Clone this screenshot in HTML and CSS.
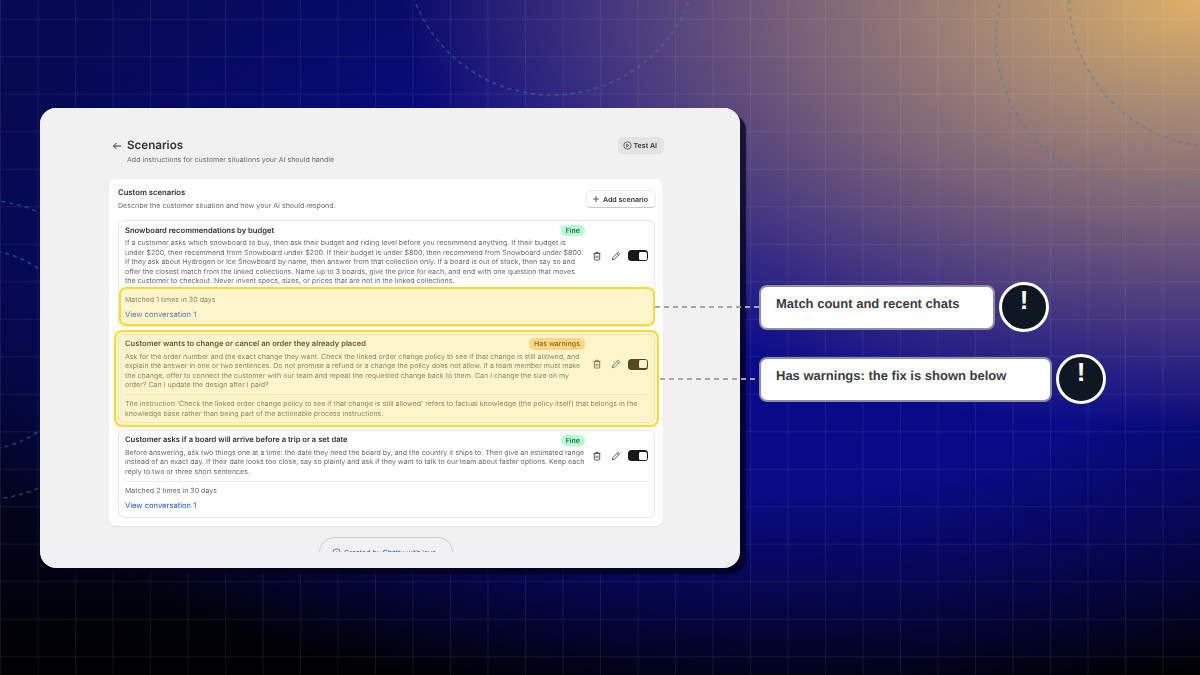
FILE: index.html
```html
<!DOCTYPE html>
<html lang="en">
<head>
	<meta charset="utf-8">
	<title>Scenarios</title>
	<link rel="stylesheet" href="styles.css">
</head>
<body>
<div class="stage">
	<svg class="rings" width="1200" height="675" viewBox="0 0 1200 675" fill="none">
		<circle cx="552" cy="-52" r="147"/>
		<circle cx="1147" cy="38" r="151"/>
		<circle cx="1219" cy="-3" r="150"/>
		<circle cx="-20" cy="350" r="150"/>
		<circle cx="-20" cy="350" r="100"/>
	</svg>

	<div class="window">
		<div class="page">
			<div class="top">
				<svg class="back" width="10" height="10" viewBox="0 0 10 10" fill="none"><path d="M9 5H1.500M4.500 2 1.500 5l3 3"/></svg>
				<div class="top-text">
					<h1>Scenarios</h1>
					<p>Add instructions for customer situations your AI should handle</p>
				</div>
				<button class="btn-test">
					<svg width="9" height="9" viewBox="0 0 9 9" fill="none"><circle cx="4.500" cy="4.500" r="3.700"/><path d="M3.600 3v3l2.300-1.500z"/></svg>
					Test AI
				</button>
			</div>

			<div class="panel">
				<div class="panel-head">
					<div>
						<h2>Custom scenarios</h2>
						<p>Describe the customer situation and how your AI should respond.</p>
					</div>
					<button class="btn-add">
						<svg width="8" height="8" viewBox="0 0 8 8" fill="none"><path d="M4 1v6M1 4h6"/></svg>
						Add scenario
					</button>
				</div>

				<div class="scenario">
					<div class="sc-row">
						<div class="sc-main">
							<div class="sc-head">
								<h3>Snowboard recommendations by budget</h3>
								<span class="tag tag-fine">Fine</span>
							</div>
							<p>If a customer asks which snowboard to buy, then ask their budget and riding level before you recommend anything. If their budget is under $200, then recommend from Snowboard under $200. If their budget is under $800, then recommend from Snowboard under $800. If they ask about Hydrogen or Ice Snowboard by name, then answer from that collection only. If a board is out of stock, then say so and offer the closest match from the linked collections. Name up to 3 boards, give the price for each, and end with one question that moves the customer to checkout. Never invent specs, sizes, or prices that are not in the linked collections.</p>
						</div>
						<div class="sc-actions">
							<svg class="ico" width="10" height="10" viewBox="0 0 10 10" fill="none"><path d="M1.500 2.500h7M3.700 2.500V1.300h2.600v1.200M2.300 2.500v5.700q0 .8.8.8h3.800q.8 0 .8-.8V2.500M4.100 4.600v2.600M5.900 4.600v2.600"/></svg>
							<svg class="ico ico-edit" width="10" height="10" viewBox="0 0 10 10" fill="none"><path d="M1.300 8.700l.6-2.300 4.700-4.700q.6-.6 1.200 0l.5.5q.6.6 0 1.200L3.600 8.100zM5.800 2.500l1.700 1.700"/></svg>
							<span class="toggle"><i></i></span>
						</div>
					</div>
					<div class="sc-meta sc-meta-open">
						<span>Matched 1 times in 30 days</span>
						<a href="#">View conversation 1</a>
					</div>
					<div class="mark mark-meta"></div>
				</div>

				<div class="scenario">
					<div class="sc-row">
						<div class="sc-main">
							<div class="sc-head">
								<h3>Customer wants to change or cancel an order they already placed</h3>
								<span class="tag tag-warn">Has warnings</span>
							</div>
							<p>Ask for the order number and the exact change they want. Check the linked order change policy to see if that change is still allowed, and explain the answer in one or two sentences. Do not promise a refund or a change the policy does not allow. If a team member must make the change, offer to connect the customer with our team and repeat the requested change back to them. Can I change the size on my order? Can I update the design after I paid?</p>
						</div>
						<div class="sc-actions">
							<svg class="ico" width="10" height="10" viewBox="0 0 10 10" fill="none"><path d="M1.500 2.500h7M3.700 2.500V1.300h2.600v1.200M2.300 2.500v5.700q0 .8.8.8h3.800q.8 0 .8-.8V2.500M4.100 4.600v2.600M5.900 4.600v2.600"/></svg>
							<svg class="ico ico-edit" width="10" height="10" viewBox="0 0 10 10" fill="none"><path d="M1.300 8.700l.6-2.300 4.700-4.700q.6-.6 1.200 0l.5.5q.6.6 0 1.200L3.600 8.100zM5.800 2.500l1.700 1.700"/></svg>
							<span class="toggle"><i></i></span>
						</div>
					</div>
					<div class="sc-rule"></div>
					<p class="sc-warning">The instruction 'Check the linked order change policy to see if that change is still allowed' refers to factual knowledge (the policy itself) that belongs in the knowledge base rather than being part of the actionable process instructions.</p>
					<div class="mark mark-card"></div>
				</div>

				<div class="scenario">
					<div class="sc-row">
						<div class="sc-main">
							<div class="sc-head">
								<h3>Customer asks if a board will arrive before a trip or a set date</h3>
								<span class="tag tag-fine">Fine</span>
							</div>
							<p>Before answering, ask two things one at a time: the date they need the board by, and the country it ships to. Then give an estimated range instead of an exact day. If their date looks too close, say so plainly and ask if they want to talk to our team about faster options. Keep each reply to two or three short sentences.</p>
						</div>
						<div class="sc-actions">
							<svg class="ico" width="10" height="10" viewBox="0 0 10 10" fill="none"><path d="M1.500 2.500h7M3.700 2.500V1.300h2.600v1.200M2.300 2.500v5.700q0 .8.8.8h3.800q.8 0 .8-.8V2.500M4.100 4.600v2.600M5.900 4.600v2.600"/></svg>
							<svg class="ico ico-edit" width="10" height="10" viewBox="0 0 10 10" fill="none"><path d="M1.300 8.700l.6-2.300 4.700-4.700q.6-.6 1.200 0l.5.5q.6.6 0 1.200L3.600 8.100zM5.800 2.500l1.700 1.700"/></svg>
							<span class="toggle"><i></i></span>
						</div>
					</div>
					<div class="sc-rule"></div>
					<div class="sc-meta">
						<span>Matched 2 times in 30 days</span>
						<a href="#">View conversation 1</a>
					</div>
				</div>
			</div>

			<div class="footer-wrap">
				<div class="footer-pill">
					<svg width="9" height="9" viewBox="0 0 9 9" fill="none"><circle cx="4.500" cy="4.500" r="3.700"/><path d="M4.500 7V3.500M3 4.500l1.500 1 1.500-1.500"/></svg>
					<span>Created by <a href="#">Chatty</a> with love</span>
				</div>
			</div>
		</div>
	</div>

	<div class="callout callout-one">
		<div class="lead lead-one"></div>
		<div class="note note-one">Match count and recent chats</div>
		<div class="alert">!</div>
	</div>
	<div class="callout callout-two">
		<div class="lead lead-two"></div>
		<div class="note note-two">Has warnings: the fix is shown below</div>
		<div class="alert">!</div>
	</div>
</div>
</body>
</html>
```

FILE: styles.css
```css
* {
	box-sizing: border-box;
}
html, body {
	margin: 0;
	padding: 0;
}
body {
	font-family: Inter, "Liberation Sans", sans-serif;
	text-rendering: geometricPrecision;
}
h1, h2, h3, p {
	margin: 0;
}
a {
	text-decoration: none;
}
button {
	font-family: inherit;
	text-rendering: inherit;
}

/* backdrop */
.stage {
	position: relative;
	width: 1200px;
	height: 675px;
	overflow: hidden;
	padding: 108px 0 0 40px;
	background-color: #05062e;
	background-image:
		linear-gradient(to right, rgba(255,255,255,.07) 1px, transparent 1px),
		linear-gradient(to bottom, rgba(255,255,255,.07) 1px, transparent 1px),
		radial-gradient(ellipse 800px 430px at 100% 0, #dfb067 0, #a98b74 25%, #7a6278 50%, #4a3a7f 72%, rgba(20,15,130,0) 100%),
		radial-gradient(ellipse 880px 430px at 780px 290px, #0a0a8c 0, #0a0a88 45%, rgba(10,10,110,0) 100%),
		linear-gradient(to bottom, #060a55 0, #040840 45%, #000 100%);
	background-size: 37.5px 37.5px, 37.5px 37.5px, auto, auto, auto;
	background-position: 0 0, 0 18.75px, 0 0, 0 0, 0 0;
}
.rings {
	position: absolute;
	left: 0;
	top: 0;
}
.rings circle {
	stroke: rgba(60,130,170,.5);
	stroke-width: 1.5;
	stroke-dasharray: 4 4;
}

/* app window */
.window {
	position: relative;
	width: 700px;
	height: 460px;
	background: #f1f1f5;
	border-radius: 16px;
	box-shadow: 6px 6px 1px rgba(3,3,25,.75);
	overflow: hidden;
}
.page {
	height: 444px;
	overflow: hidden;
	padding: 29px 77px 0 69px;
	background: #f1f1f2;
	filter: blur(.3px);
}

.top {
	display: flex;
	align-items: flex-start;
	margin: 0 -1px 0 3px;
}
.back {
	margin: 3.500px 5px 0 0;
	flex: none;
}
.back path {
	stroke: #303030;
	stroke-width: 1;
}
.top-text {
	flex: 1;
}
.top-text h1 {
	font-size: 11.600px;
	line-height: 17px;
	font-weight: 600;
	color: #303030;
}
.top-text p {
	font-size: 7.050px;
	line-height: 9.600px;
	margin-top: 1px;
	color: #6b6b6b;
}
.btn-test {
	display: flex;
	align-items: center;
	gap: 2px;
	height: 17px;
	padding: 0 7px 0 5px;
	border: 0;
	border-radius: 5px;
	background: #e3e3e3;
	color: #303030;
	font-size: 7.050px;
	font-weight: 600;
}
.btn-test svg {
	stroke: #4a4a4a;
	stroke-width: .8;
}

/* panel */
.panel {
	margin-top: 14.500px;
	padding: 8.700px 8px 8px 9px;
	background: #fff;
	border-radius: 7px;
	box-shadow: 0 1px 1px rgba(0,0,0,.08);
}
.panel-head {
	display: flex;
	align-items: center;
	justify-content: space-between;
	margin-bottom: 9.600px;
}
.panel-head h2 {
	font-size: 7.700px;
	line-height: 9.600px;
	font-weight: 600;
	color: #303030;
}
.panel-head p {
	font-size: 7.050px;
	line-height: 9.600px;
	margin-top: 3.400px;
	color: #6b6b6b;
}
.btn-add {
	display: flex;
	align-items: center;
	gap: 3px;
	height: 16px;
	padding: 0 7px 0 5px;
	border: 0;
	border-radius: 4px;
	background: #fff;
	box-shadow: 0 0 0 .5px #d8d8d8, 0 1px 0 #bbb;
	color: #303030;
	font-size: 7.050px;
	font-weight: 600;
}
.btn-add svg {
	stroke: #4a4a4a;
	stroke-width: .9;
}

/* scenario cards */
.scenario {
	position: relative;
	margin-bottom: 7px;
	padding: 4.700px 6px 6px;
	border: 1px solid #e8e8e8;
	border-radius: 6px;
	background: #fff;
}
.scenario:last-child {
	margin-bottom: 0;
}
.sc-row {
	display: flex;
	align-items: center;
}
.sc-main {
	width: 460px;
	flex: none;
}
.sc-head {
	display: flex;
	align-items: center;
	justify-content: space-between;
	height: 9.600px;
	margin-bottom: 2.800px;
}
.sc-head h3 {
	font-size: 7.600px;
	line-height: 9.600px;
	font-weight: 600;
	color: #303030;
}
.sc-main p,
.sc-warning {
	font-size: 7.050px;
	line-height: 9.500px;
	color: #6b6b6b;
}
.tag {
	padding: 0 5px;
	height: 11.500px;
	line-height: 11.500px;
	border-radius: 5px;
	font-size: 7.050px;
	font-weight: 500;
}
.tag-fine {
	background: #b4fed2;
	color: #0c5132;
}
.tag-warn {
	background: #ffd6a4;
	color: #5e4200;
}
.sc-actions {
	display: flex;
	align-items: center;
	margin-left: auto;
}
.ico {
	stroke: #4a4a4a;
	stroke-width: .9;
	margin-right: 9px;
}
.ico-edit {
	margin-right: 7px;
}
.toggle {
	display: block;
	width: 20px;
	height: 11px;
	padding: 1.500px;
	border-radius: 3.500px;
	background: #1a1a1a;
}
.toggle i {
	display: block;
	width: 8px;
	height: 8px;
	margin-left: auto;
	border-radius: 1.500px;
	background: #fff;
}
.sc-rule {
	height: 1px;
	margin-top: 4.700px;
	background: #ebebeb;
}
.sc-warning {
	margin-top: 4px;
	margin-bottom: -2.500px;
}
.sc-meta {
	margin-top: 4px;
	font-size: 7.050px;
	line-height: 9.500px;
	color: #6b6b6b;
}
.sc-meta-open {
	margin-top: 9.500px;
}
.sc-meta span,
.sc-meta a {
	display: block;
}
.sc-meta a {
	margin-top: 5.500px;
	font-size: 7.600px;
	color: #1f5bc8;
}

/* yellow highlight over a card */
.mark {
	position: absolute;
	border: 2.500px solid #ffd92e;
	background: rgba(255,214,51,.25);
}
.mark-meta {
	left: 0;
	right: -1px;
	bottom: 0;
	height: 39px;
	border-radius: 7px;
}
.mark-card {
	left: -5px;
	right: -5px;
	top: -5px;
	bottom: -5.500px;
	border-radius: 8px;
}

/* clipped footer */
.footer-wrap {
	display: flex;
	justify-content: center;
	margin-top: 11px;
}
.footer-pill {
	display: flex;
	align-items: flex-start;
	gap: 3px;
	width: 134px;
	height: 30px;
	padding: 10px 0 0 12px;
	border: 1px solid #ccc;
	border-radius: 15px;
	font-size: 7.050px;
	line-height: 10px;
	color: #616161;
}
.footer-pill a {
	color: #1f5bc8;
}
.footer-pill svg {
	stroke: #1f7a5a;
	stroke-width: .8;
}

/* callouts */
.callout {
	position: absolute;
	display: flex;
	align-items: center;
}
.callout-one {
	left: 655px;
	top: 282px;
}
.callout-two {
	left: 660px;
	top: 354px;
}
.lead {
	height: 2px;
	background: repeating-linear-gradient(to right, #a5a5ad 0, #a5a5ad 5px, transparent 5px, transparent 9px);
}
.lead-one {
	width: 104px;
}
.lead-two {
	width: 99px;
}
.note {
	height: 45px;
	padding: 9px 15px 0;
	border: 2px solid #8f8fa3;
	border-radius: 8px;
	background: #fff;
	font-family: "Liberation Sans", Arial, sans-serif;
	font-size: 13px;
	line-height: 16px;
	font-weight: 700;
	color: #3c3c40;
	white-space: nowrap;
}
.note-one {
	width: 236px;
}
.note-two {
	width: 293px;
}
.alert {
	display: flex;
	align-items: center;
	justify-content: center;
	width: 50px;
	height: 50px;
	margin-left: 4px;
	padding-bottom: 14px;
	border: 3px solid #fff;
	border-radius: 50%;
	background: #0f1722;
	font-family: "Liberation Sans", Arial, sans-serif;
	font-size: 26px;
	line-height: 26px;
	font-weight: 700;
	color: #fff;
}
```
